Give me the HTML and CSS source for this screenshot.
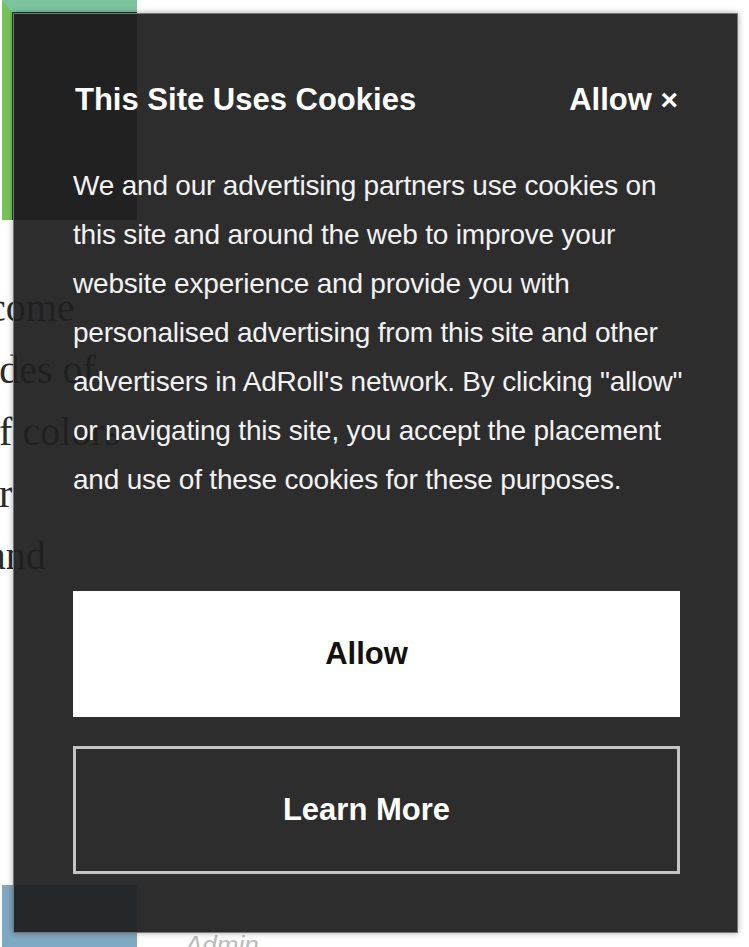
FILE: index.html
```html
<!DOCTYPE html>
<html lang="en">

<head>
    <meta charset="UTF-8">
    <meta name="viewport" content="width=device-width, initial-scale=1.0">
    <title>This Site Uses Cookies</title>

    <link rel="stylesheet" href="styles.css">

</head>

<body>
    <!-- Page behind the banner -->
    <div class="page">
        <div class="side">
            <div class="thumb thumb-green"></div>
            <p class="article">
                come<br>
                <span class="link">l</span>des of<br>
                if colors<br>
                ir<br>
                and
            </p>
            <div class="thumb thumb-blue"></div>
        </div>
        <div class="byline">Admin</div>
    </div>

    <!-- Cookie banner -->
    <div class="cookie-modal">
        <div class="cookie-head">
            <h1>This Site Uses Cookies</h1>
            <button class="close-btn">Allow <span class="x">&times;</span></button>
        </div>

        <p class="cookie-text">
            We and our advertising partners use cookies on<br>
            this site and around the web to improve your<br>
            website experience and provide you with<br>
            personalised advertising from this site and other<br>
            advertisers in AdRoll's network. By clicking "allow"<br>
            or navigating this site, you accept the placement<br>
            and use of these cookies for these purposes.
        </p>

        <div class="cookie-actions">
            <button class="btn btn-allow">Allow</button>
            <button class="btn btn-more">Learn More</button>
        </div>
    </div>
</body>

</html>
```

FILE: styles.css
```css
body {
    margin: 0;
    background: #fff;
    font-family: 'Liberation Sans', Arial, sans-serif;
    position: relative;
    height: 947px;
    overflow: hidden;
}

/* Page behind */
.page {
    display: flex;
    height: 947px;
}

.side {
    width: 137px;
    display: flex;
    flex-direction: column;
}

.thumb {
    width: 135px;
    margin-left: 2px;
}

.thumb-green {
    height: 220px;
    box-sizing: border-box;
    background: #26322a;
    border-top: 12px solid #7cc49d;
    border-left: 10px solid #78c25a;
}

.thumb-blue {
    margin-top: auto;
    height: 62px;
    background: #7fa8c2;
}

.article {
    margin: 57px 0 0 -12px;
    font-family: 'Liberation Serif', 'Times New Roman', serif;
    font-size: 40px;
    line-height: 62px;
    color: #2a2a2a;
    white-space: nowrap;
}

.article .link {
    color: #3a7bbf;
}

.byline {
    align-self: flex-end;
    margin: 0 0 -14px 48px;
    font-style: italic;
    font-size: 26px;
    color: #bbb;
}

/* Cookie banner */
.cookie-modal {
    position: absolute;
    left: 13px;
    top: 13px;
    width: 725px;
    height: 920px;
    box-sizing: border-box;
    padding: 67px 57px 0 59px;
    background: rgba(32, 32, 32, 0.94);
    border: 1px solid #777;
    box-shadow: 0 0 6px rgba(0, 0, 0, 0.35);
    color: #fff;
}

.cookie-head {
    display: flex;
    justify-content: space-between;
    align-items: center;
}

.cookie-head h1 {
    margin: 0;
    padding-left: 2px;
    font-size: 31px;
    line-height: 38px;
    font-weight: bold;
}

.close-btn {
    background: none;
    border: none;
    padding: 0 2px 0 0;
    color: #fff;
    font-family: inherit;
    font-size: 31px;
    line-height: 38px;
    font-weight: bold;
    cursor: pointer;
}

.close-btn .x {
    font-size: 30px;
}

.cookie-text {
    margin: 42px 0 0;
    font-size: 28px;
    line-height: 49px;
    letter-spacing: -0.2px;
    white-space: nowrap;
    color: #f2f2f2;
}

.cookie-actions {
    margin-top: 87px;
    display: flex;
    flex-direction: column;
    gap: 29px;
}

.btn {
    width: 100%;
    height: 126px;
    padding: 0 20px 0 0;
    font-family: inherit;
    font-size: 31px;
    font-weight: bold;
    cursor: pointer;
}

.btn-allow {
    background: #fff;
    color: #111;
    border: none;
}

.btn-more {
    background: transparent;
    color: #fff;
    border: 3px solid #c4c4c4;
    height: 128px;
}
```
